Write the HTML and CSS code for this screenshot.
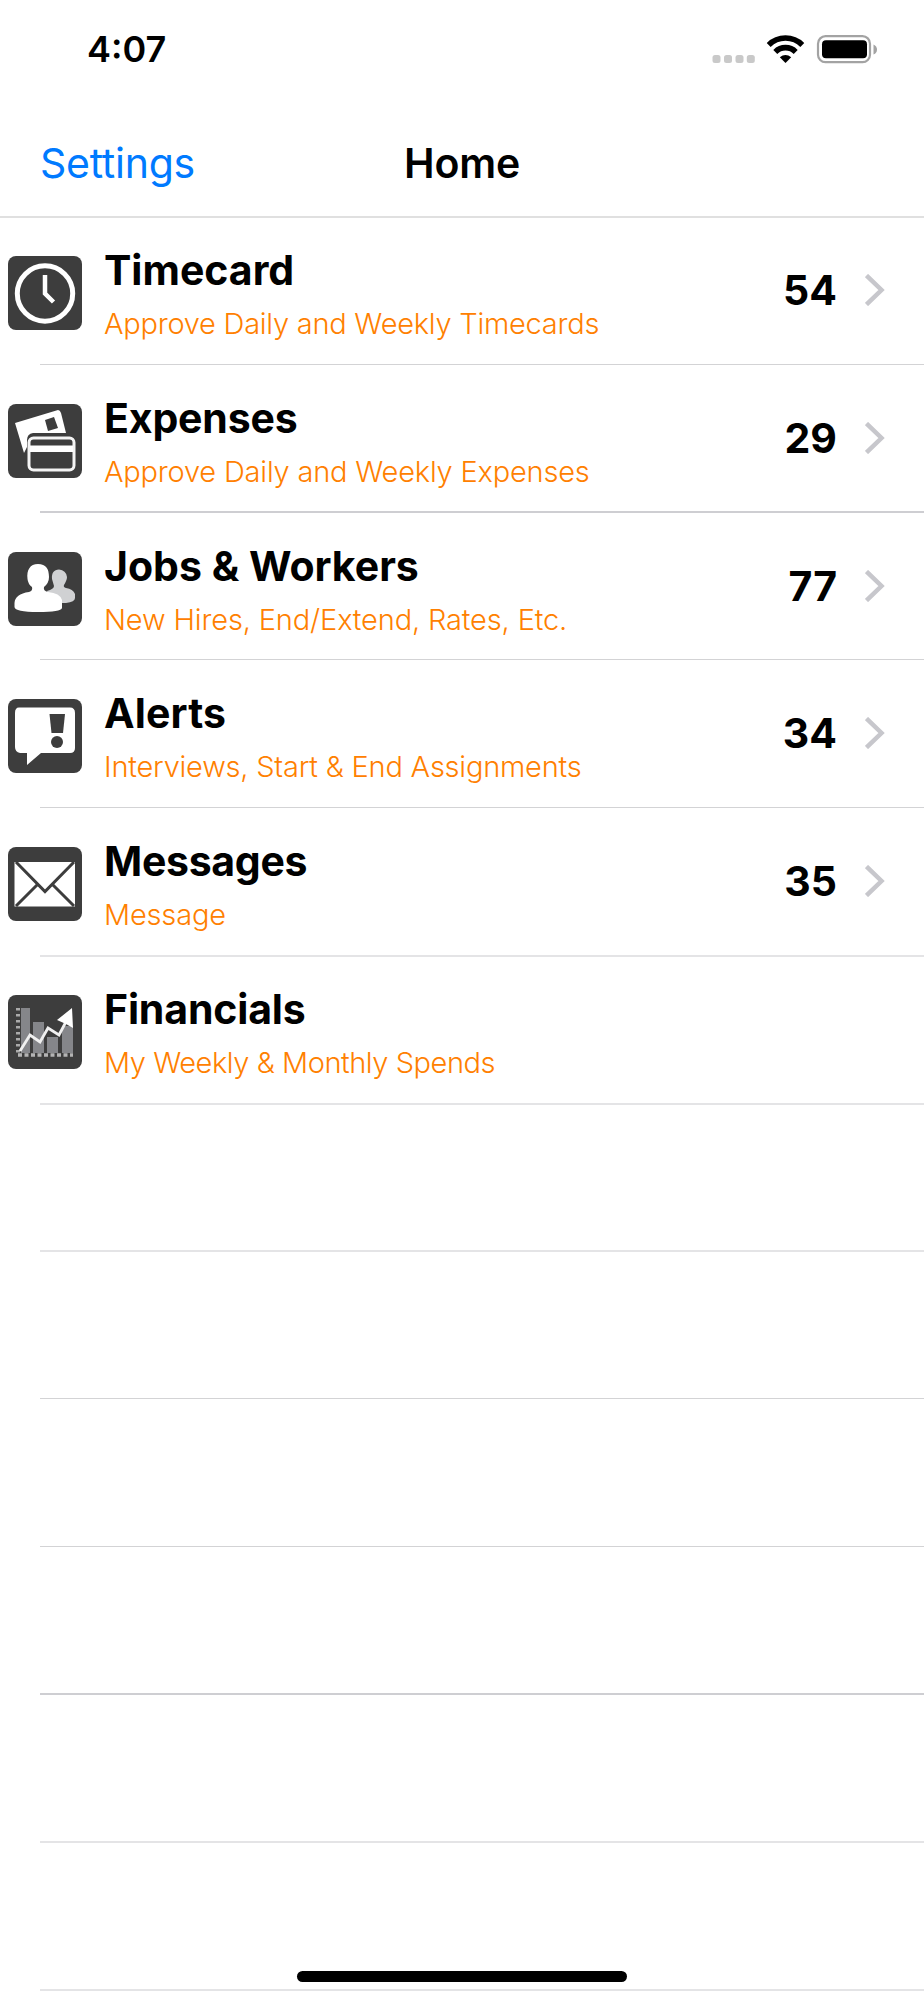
FILE: index.html
```html
<!DOCTYPE html>
<html lang="en">
<head>
<meta charset="utf-8">
<title>Home</title>
<link rel="stylesheet" href="styles.css">
</head>
<body>
<div class="screen">
  <header class="top">
    <div class="status">
      <span class="time">4:07</span>
      <svg class="indicators" width="170" height="30" viewBox="0 0 170 30">
        <g fill="#c9c9c9"><rect x="0.500" y="20" width="8" height="8" rx="2.5"/><rect x="12" y="20" width="8" height="8" rx="2.5"/><rect x="23.500" y="20" width="8" height="8" rx="2.5"/><rect x="34.800" y="20" width="8" height="8" rx="2.5"/></g>
        <g fill="none" stroke="#000" stroke-width="5.600"><path d="M56.700 9.900A24 24 0 0 1 90.300 9.900"/><path d="M63.300 16.900A14.400 14.400 0 0 1 83.700 16.900"/></g>
        <path d="M73.500 28L67.800 22.200Q73.500 17.600 79.200 22.200Z"/>
        <rect x="106" y="1.200" width="52" height="26" rx="7.500" fill="none" stroke="#a3a3a3" stroke-width="2.200"/>
        <rect x="110" y="5.200" width="45" height="18" rx="4"/>
        <path d="M161.500 9.500Q165 11 165 14.500T161.500 19.500Z" fill="#a3a3a3"/>
      </svg>
    </div>
    <nav class="bar"><a class="settings">Settings</a><h1 class="heading">Home</h1><span></span></nav>
  </header>
  <main class="list">
    <section class="row">
      <svg class="icon" viewBox="0 0 74 74"><rect class="tile" width="74" height="74" rx="8"/><circle cx="37" cy="37.500" r="27.700" fill="none" stroke="#fff" stroke-width="5"/><path d="M37 19V37.500L45.500 46" fill="none" stroke="#fff" stroke-width="4.500"/></svg>
      <div class="words"><h2 class="title">Timecard</h2><p class="sub s-time">Approve Daily and Weekly Timecards</p></div>
      <span class="count">54</span><svg class="chevron" viewBox="0 0 20 32"><path d="M1.500 1.500L16.500 16L1.500 30.500"/></svg>
    </section>
    <section class="row strong">
      <svg class="icon" viewBox="0 0 74 74"><rect class="tile" width="74" height="74" rx="8"/><path d="M7 19L50 6Q52 6 53 9L58 29H25Q19 30 19 36V43L16 49Z" fill="#fff"/><path d="M37 16L46 13L50 24L40 27Z" fill="#3d3d3d"/><rect x="21" y="34" width="45" height="32" rx="4.500" fill="#3d3d3d" stroke="#f4f4f4" stroke-width="3"/><rect x="22" y="41.500" width="43" height="6.500" fill="#fff"/></svg>
      <div class="words"><h2 class="title t-exp">Expenses</h2><p class="sub s-exp">Approve Daily and Weekly Expenses</p></div>
      <span class="count">29</span><svg class="chevron" viewBox="0 0 20 32"><path d="M1.500 1.500L16.500 16L1.500 30.500"/></svg>
    </section>
    <section class="row">
      <svg class="icon" viewBox="0 0 74 74"><rect class="tile" width="74" height="74" rx="8"/><path d="M51 17.500C46 17.500 43.500 21 44 27L46 34Q46 37 39 39L43 51H58Q67 50 67 46V42Q65 37 58 36Q55 35 56 33Q59 28 59 25Q58 18 51 17.500Z" fill="#d0d1d3"/><path d="M30 12C22 12 18.500 18 19.500 27Q20 32 24 35Q25 39 21 40Q7 42 6.500 51V55Q7 60 30 60T54 56V48Q52 41 40 40Q35 39 36 35Q41 31 41 25C41 17 38 12 30 12Z" fill="#fff"/></svg>
      <div class="words"><h2 class="title">Jobs &amp; Workers</h2><p class="sub s-jobs">New Hires, End/Extend, Rates, Etc.</p></div>
      <span class="count">77</span><svg class="chevron" viewBox="0 0 20 32"><path d="M1.500 1.500L16.500 16L1.500 30.500"/></svg>
    </section>
    <section class="row">
      <svg class="icon" viewBox="0 0 74 74"><rect class="tile" width="74" height="74" rx="8"/><path d="M11 8.500H62Q67 8.500 67 14V49Q67 54 62 54H33L19 66V54H12Q7 53 7 48V14Q7 8.500 11 8.500Z" fill="#fff"/><path d="M41.500 15H57L55 34H43.500Z" fill="#3d3d3d"/><circle cx="49" cy="43" r="6" fill="#3d3d3d"/></svg>
      <div class="words"><h2 class="title t-alert">Alerts</h2><p class="sub s-alert">Interviews, Start &amp; End Assignments</p></div>
      <span class="count">34</span><svg class="chevron" viewBox="0 0 20 32"><path d="M1.500 1.500L16.500 16L1.500 30.500"/></svg>
    </section>
    <section class="row soft">
      <svg class="icon" viewBox="0 0 74 74"><rect class="tile" width="74" height="74" rx="8"/><rect x="6.500" y="15" width="60.500" height="44.500" fill="#fff"/><path d="M8 15L37 44.500L66 15M8 59L29 38M66 59L45 38" fill="none" stroke="#3d3d3d" stroke-width="3"/></svg>
      <div class="words"><h2 class="title t-msg">Messages</h2><p class="sub s-msg">Message</p></div>
      <span class="count">35</span><svg class="chevron" viewBox="0 0 20 32"><path d="M1.500 1.500L16.500 16L1.500 30.500"/></svg>
    </section>
    <section class="row soft">
      <svg class="icon" viewBox="0 0 74 74"><rect class="tile" width="74" height="74" rx="8"/><path d="M13 13H22V58H13ZM25 27H36V58H25ZM39 42H50V58H39ZM54 31H65V58H54Z" fill="#85868a"/><path d="M10 13V61" stroke="#aaa" stroke-width="4" stroke-dasharray="2.500 3.500"/><path d="M10 60H65" stroke="#b4b4b4" stroke-width="3.500" stroke-dasharray="4 2.500"/><path d="M12 56L22 40L32 47L40 33L51 40L60 23" fill="none" stroke="#f0f0f0" stroke-width="2.800"/><path d="M64 13L65 33L58 29L49 25Z" fill="#fff"/></svg>
      <div class="words"><h2 class="title t-fin">Financials</h2><p class="sub s-fin">My Weekly &amp; Monthly Spends</p></div>
    </section>
    <section class="row soft"></section>
    <section class="row"></section>
    <section class="row"></section>
    <section class="row strong"></section>
    <section class="row soft"></section>
    <section class="row soft"></section>
  </main>
  <div class="home-indicator"></div>
</div>
</body>
</html>
```
FILE: styles.css
```css
* { box-sizing: border-box; }
body { margin: 0; background: #fff; color: #000; font-family: Inter, "Liberation Sans", sans-serif; }
.screen { position: relative; width: 924px; height: 2000px; overflow: hidden; }
.top { height: 218px; border-bottom: 2px solid #e0e0e0; }
.status { display: flex; justify-content: space-between; height: 110px; padding: 35px 42px 0 87px; }
.time { font-size: 36px; line-height: 29px; font-weight: 600; }
.bar { display: grid; grid-template-columns: 1fr auto 1fr; align-items: center; height: 106px; padding: 0 40px; }
.settings { color: #007aff; font-size: 41px; letter-spacing: -0.25px; }
.heading { margin: 0; font-size: 41px; font-weight: 600; letter-spacing: -0.2px; }
.row { display: flex; height: 147.75px; position: relative; }
.row::after { content: ""; position: absolute; left: 40px; right: 0; bottom: 1px; height: 1px; background: #d3d3d5; }
.row.strong::after { height: 2px; background: #ceced2; }
.row.soft::after { bottom: 0; height: 2px; background: #e4e4e6; }
.icon { width: 74px; height: 74px; margin: 38px 0 0 8px; flex: none; }
.tile { fill: #3d3d3d; }
.words { flex: 1; padding: 27px 0 0 22px; }
.title { margin: 0; font-size: 41px; line-height: 50px; font-weight: 700; white-space: nowrap; }
.t-exp, .t-fin { letter-spacing: -0.15px; }
.t-alert { letter-spacing: 0.15px; }
.t-msg { letter-spacing: -0.3px; }
.sub { margin: 7px 0 0; font-size: 29px; line-height: 44px; font-weight: 300; color: #ff8000; white-space: nowrap; }
.s-time { letter-spacing: -0.25px; }
.s-exp { letter-spacing: -0.2px; }
.s-jobs { letter-spacing: -0.15px; }
.s-alert { letter-spacing: -0.22px; }
.s-msg { letter-spacing: -0.18px; }
.s-fin { letter-spacing: -0.45px; }
.count { margin-top: 47px; font-size: 41px; line-height: 50px; font-weight: 700; }
.chevron { width: 20px; height: 32px; margin: 56px 39px 0 28px; }
.chevron path { fill: none; stroke: #c7c7cc; stroke-width: 4.500; }
.home-indicator { position: absolute; left: 297px; top: 1971px; width: 330px; height: 11px; border-radius: 6px; background: #000; }
```
